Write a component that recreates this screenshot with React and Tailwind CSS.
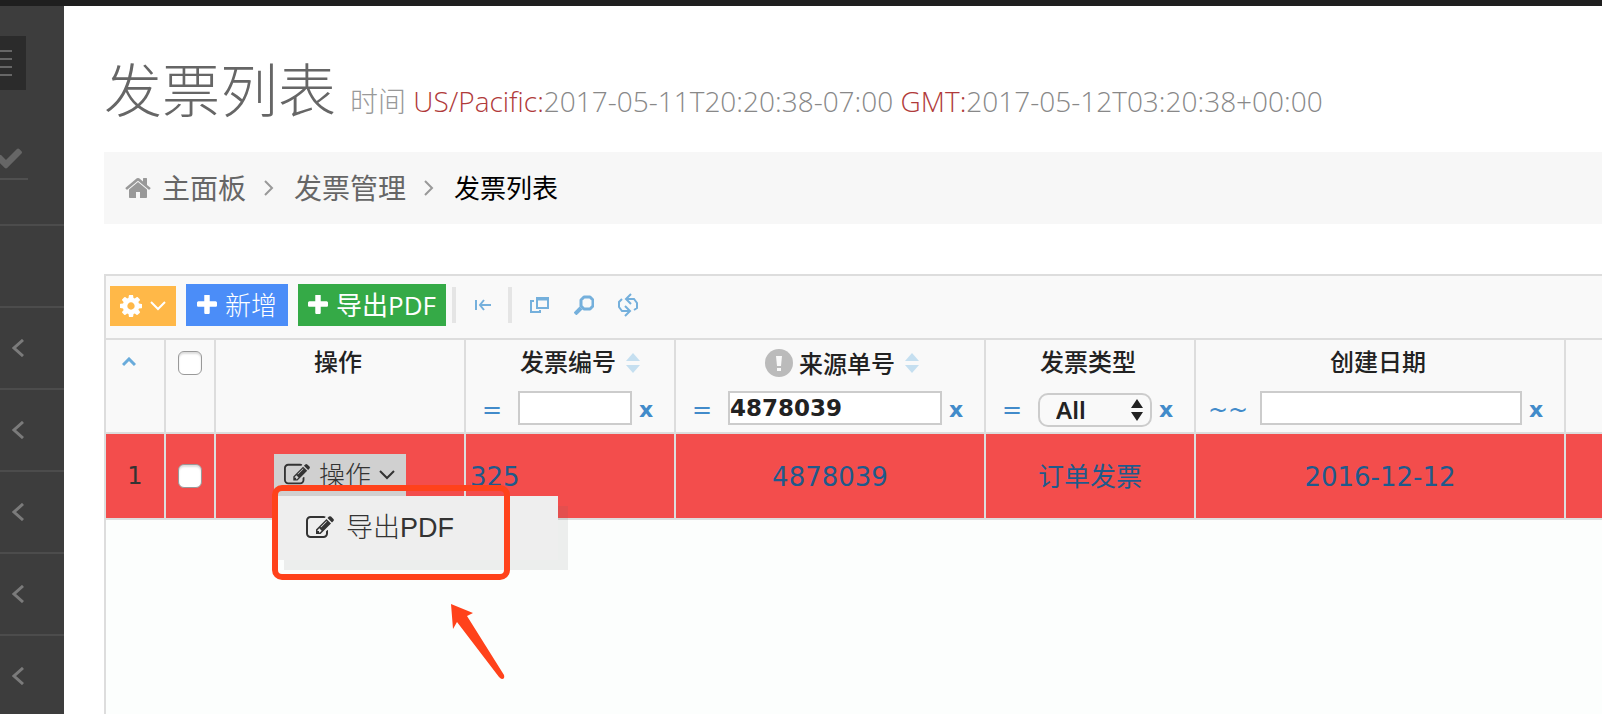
import React, { useState } from 'react';

const Icon = ({ d, box = '0 0 1792 1792', className }) => (
  <svg viewBox={box} fill="currentColor" aria-hidden="true" className={`shrink-0 ${className}`}>
    <path d={d} />
  </svg>
);

const Stroke = ({ points, box, width = 2, className }) => (
  <svg viewBox={box} fill="none" stroke="currentColor" strokeWidth={width} aria-hidden="true" className={`shrink-0 ${className}`}>
    <polyline points={points} />
  </svg>
);

const paths = {
  home: 'M1472 992v480q0 26-19 45t-45 19h-384v-384h-256v384h-384q-26 0-45-19t-19-45v-480q0-1 .5-3t.5-3l575-474 575 474q1 2 1 6zm223-69l-62 74q-8 9-21 11h-3q-13 0-21-7l-692-577-692 577q-12 8-24 7-13-2-21-11l-62-74q-8-10-7-23.5t11-21.5l719-599q32-26 76-26t76 26l244 204v-195q0-14 9-23t23-9h192q14 0 23 9t9 23v408l219 182q10 8 11 21.5t-7 23.5z',
  cog: 'M1152 896q0-106-75-181t-181-75-181 75-75 181 75 181 181 75 181-75 75-181zm512-109v222q0 12-8 23t-20 13l-185 28q-19 54-39 91 35 50 107 138 10 12 10 25t-9 23q-27 37-99 108t-94 71q-12 0-26-9l-138-108q-44 23-91 38-16 136-29 186-7 28-36 28h-222q-14 0-24.5-8.5t-11.5-21.5l-28-184q-49-16-90-37l-141 107q-10 9-25 9-14 0-25-11-126-114-165-168-7-10-7-23 0-12 8-23 15-21 51-66.5t54-70.5q-27-50-41-99l-183-27q-13-2-21-12.5t-8-23.5v-222q0-12 8-23t19-13l186-28q14-46 39-92-40-57-107-138-10-12-10-24 0-10 9-23 26-36 98.5-107.5t94.5-71.5q13 0 26 10l138 107q44-23 91-38 16-136 29-186 7-28 36-28h222q14 0 24.5 8.5t11.5 21.5l28 184q49 16 90 37l142-107q9-9 24-9 13 0 25 10 129 119 165 170 7 8 7 22 0 12-8 23-15 21-51 66.5t-54 70.5q26 50 41 98l183 28q13 2 21 12.5t8 23.5z',
  plus: 'M1600 736v192q0 40-28 68t-68 28h-416v416q0 40-28 68t-68 28h-192q-40 0-68-28t-28-68v-416h-416q-40 0-68-28t-28-68v-192q0-40 28-68t68-28h416v-416q0-40 28-68t68-28h192q40 0 68 28t28 68v416h416q40 0 68 28t28 68z',
  check: 'M1671 566q0 40-28 68l-724 724-136 136q-28 28-68 28t-68-28l-136-136-362-362q-28-28-28-68t28-68l136-136q28-28 68-28t68 28l294 295 656-657q28-28 68-28t68 28l136 136q28 28 28 68z',
  edit: 'M888 1184l116-116-152-152-116 116v56h96v96h56zm440-720q-16-16-33 1l-350 350q-17 17-1 33t33-1l350-350q17-17 1-33zm80 594v190q0 119-84.5 203.5t-203.5 84.5h-832q-119 0-203.5-84.5t-84.5-203.5v-832q0-119 84.5-203.5t203.5-84.5h832q63 0 117 25 15 7 18 23 3 17-9 29l-49 49q-14 14-32 8-23-6-45-6h-832q-66 0-113 47t-47 113v832q0 66 47 113t113 47h832q66 0 113-47t47-113v-126q0-13 9-22l64-64q15-15 35-7t20 29zm-96-738l288 288-672 672h-288v-288zm444 132l-92 92-288-288 92-92q28-28 68-28t68 28l152 152q28 28 28 68t-28 68z',
};

const PlusIcon = () => <Icon d={paths.plus} box="192 192 1408 1408" className="size-5" />;
const ChevronDown = ({ className = '' }) => (
  <Stroke points="1,1 8,8 15,1" box="0 0 16 10" className={`h-[10px] w-4 ${className}`} />
);

const SortIcon = () => (
  <svg viewBox="0 0 14 20" fill="#c5dff0" aria-hidden="true" className="h-5 w-[14px] shrink-0">
    <path d="M7 0l7 8H0zM0 12h14l-7 8z" />
  </svg>
);

const Sidebar = () => (
  <aside className="flex w-16 shrink-0 flex-col items-start overflow-hidden bg-[#3d3d3d] pt-[30px]">
    <button type="button" aria-label="菜单" className="flex h-[54px] w-[26px] items-center bg-[#2b2b2b] text-[#666]">
      <svg viewBox="0 0 12 28" fill="currentColor" aria-hidden="true" className="h-7 w-3">
        <path d="M0 1h12v2H0zM0 9h12v2H0zM0 17h12v2H0zM0 25h12v2H0z" />
      </svg>
    </button>
    <div className="flex h-[90px] w-7 items-center justify-end border-b-2 border-[#505050] pt-12 pr-1 text-[#666]">
      <Icon d={paths.check} className="size-[30px]" />
    </div>
    <nav className="mt-11 w-full">
      <div className="h-[82px] border-t-2 border-[#4c4c4c]" />
      {[1, 2, 3, 4, 5].map((n) => (
        <a key={n} href="#" aria-label={`菜单 ${n}`} className="flex h-[82px] items-center border-t-2 border-[#4c4c4c] pl-3 text-[#7b7b7b]">
          <Stroke points="11,1 2,9 11,17" box="0 0 12 18" width={3} className="h-[18px] w-3" />
        </a>
      ))}
    </nav>
  </aside>
);

const Toolbar = () => (
  <div className="flex h-16 items-center border-b-2 border-[#ddd] bg-[#f9f9f9] px-1 pb-1 font-['Open_Sans','Noto_Sans_CJK_SC',sans-serif] text-[26px] leading-10 font-light text-white">
    <button type="button" aria-label="设置" className="mt-[2px] flex h-10 w-[66px] items-center justify-center gap-2 bg-[#ffb848]">
      <Icon d={paths.cog} box="128 128 1536 1536" className="size-[22px]" />
      <ChevronDown />
    </button>
    <button type="button" className="ml-[10px] flex h-[42px] items-center gap-2 bg-[#4b8df8] pr-[11px] pl-[11px]">
      <PlusIcon />
      新增
    </button>
    <button type="button" className="ml-[10px] flex h-[42px] items-center gap-2 bg-[#35aa47] px-[10px] font-normal">
      <PlusIcon />
      导出PDF
    </button>
    <span className="ml-[6px] h-9 w-1 bg-[#e5e5e5]" />
    <div className="flex flex-1 items-center text-[#75b0dc]">
      <button type="button" aria-label="折叠" className="ml-[18px]">
        <svg viewBox="0 0 18 12" fill="none" stroke="currentColor" strokeWidth="2" className="h-3 w-[18px]">
          <path d="M2 1v10M17 6H6M10 1L6 6l4 5" />
        </svg>
      </button>
      <span className="ml-4 h-9 w-1 bg-[#e5e5e5]" />
      <button type="button" aria-label="选择列" className="ml-[18px]">
        <svg viewBox="0 0 20 18" fill="none" stroke="currentColor" strokeWidth="2" className="h-[18px] w-5">
          <path d="M7 2h11v10H7zM4 5H1v11h9v-2" />
          <path d="M7 3h11" strokeWidth="3" />
        </svg>
      </button>
      <button type="button" aria-label="查找" className="ml-6">
        <svg viewBox="0 0 20 20" fill="none" stroke="currentColor" className="size-5">
          <path d="M10 2h6l3 3v6l-3 3h-6l-3-3V5z" strokeWidth="3" strokeLinejoin="round" />
          <path d="M7 13l-6 6" strokeWidth="4" />
        </svg>
      </button>
      <button type="button" aria-label="刷新" className="ml-6">
        <svg viewBox="0 0 20 24" fill="none" stroke="currentColor" strokeWidth="2" className="h-6 w-5">
          <path d="M13 1L8 6l5 5M8 6h8l3 4v5l-3 2M7 13l5 5-5 5M12 18H4l-3-4V9l3-3" />
        </svg>
      </button>
    </div>
  </div>
);

const checkboxClass =
  'mx-auto block size-6 appearance-none rounded-[6px] border border-[#999] bg-white shadow-[inset_0_2px_2px_#ddd] checked:bg-[#4b8df8]';

const thClass = 'h-[94px] border-r-2 border-b-2 border-[#ddd] p-0 align-top font-semibold';
const tdClass = 'h-[86px] border-r-2 border-b-2 border-[#ddd] p-0 text-center';

const HeadTitle = ({ children }) => (
  <div className="flex h-[46px] items-center justify-center gap-[10px] pr-1 text-2xl font-medium">{children}</div>
);

const FilterRow = ({ op, wide, children }) => (
  <div className="flex h-11 items-center text-2xl text-[#428bca]">
    <button type="button" className={`shrink-0 pt-1 text-center font-normal ${wide ? 'w-16' : 'w-[52px]'}`}>{op}</button>
    <div className="relative min-w-0 flex-1 text-[#222]">{children}</div>
    <button type="button" aria-label="清除" className="w-[42px] shrink-0 pt-1 pl-[7px] text-left text-[22px] font-bold">x</button>
  </div>
);

const FilterInput = ({ label, initial = '' }) => {
  const [value, setValue] = useState(initial);
  return (
    <input
      type="text"
      aria-label={label}
      value={value}
      onChange={(e) => setValue(e.target.value)}
      className="block h-[34px] w-full border-2 border-[#ccc] bg-white p-0 font-['DejaVu_Sans',sans-serif] text-[23px] leading-7 font-bold"
    />
  );
};

// Action dropdown of a row, with the highlighted menu entry below it
const ActionMenu = () => (
  <div className="relative mx-auto h-[42px] w-[132px] font-['Open_Sans','Noto_Sans_CJK_SC',sans-serif] text-[#333]">
    <button type="button" className="flex h-[42px] w-full items-center bg-[#d0d0d0] pl-[10px] text-[26px] font-light">
      <Icon d={paths.edit} className="size-[26px]" />
      <span className="ml-[9px]">操作</span>
      <ChevronDown className="ml-2" />
    </button>
    <div className="absolute top-[42px] left-0 z-10 w-[284px] bg-[#eee] shadow-[10px_10px_0_rgba(102,102,102,0.1)]">
      <a href="#" className="flex h-16 items-center gap-3 pl-8 font-['Liberation_Sans','Noto_Sans_CJK_SC',sans-serif] text-[27px] font-light">
        <Icon d={paths.edit} className="size-7" />
        导出PDF
      </a>
    </div>
    <div className="pointer-events-none absolute top-[31px] -left-[2px] z-20 h-[95px] w-[238px] rounded-[10px] border-6 border-[#ff421b]" />
    <svg viewBox="0 0 56 78" fill="#ff421b" aria-hidden="true" className="pointer-events-none absolute top-[149px] left-[176px] z-20 h-[78px] w-14">
      <path d="M1 1L23 10L17 13L54 72Q55 76 52 76Q51 76 49 74L7 19L3 26Z" />
    </svg>
  </div>
);

const InvoiceGrid = () => (
  <section className="flex-1 border-t-2 border-l-2 border-[#ddd] bg-[#fcfefd]">
    <Toolbar />
    <table className="w-full table-fixed border-separate border-spacing-0 font-['DejaVu_Sans','Noto_Sans_CJK_SC',sans-serif] text-[26px] text-[#222]">
      <colgroup>
        <col className="w-[60px]" />
        <col className="w-[50px]" />
        <col className="w-[250px]" />
        <col className="w-[210px]" />
        <col className="w-[310px]" />
        <col className="w-[210px]" />
        <col className="w-[370px]" />
        <col />
      </colgroup>
      <thead className="bg-[#f9f9f9]">
        <tr>
          <th className={thClass}>
            <div className="flex h-11 items-center pl-4 text-[#69abdb]">
              <Stroke points="1,8 7,2 13,8" box="0 0 14 10" width={3} className="h-[10px] w-[14px]" />
            </div>
          </th>
          <th className={thClass}>
            <div className="flex h-[46px] items-center">
              <input type="checkbox" aria-label="全选" className={checkboxClass} />
            </div>
          </th>
          <th className={thClass}>
            <HeadTitle>操作</HeadTitle>
          </th>
          <th className={thClass}>
            <HeadTitle>
              <span className="ml-6">发票编号</span>
              <SortIcon />
            </HeadTitle>
            <FilterRow op="=">
              <FilterInput label="发票编号" />
            </FilterRow>
          </th>
          <th className={thClass}>
            <HeadTitle>
              <svg viewBox="0 0 28 28" aria-hidden="true" className="ml-7 size-7 shrink-0">
                <circle cx="14" cy="14" r="14" fill="#bbb" />
                <path d="M11 7h6l-1 10h-4zM12 19h4v3h-4z" fill="#f9f9f9" />
              </svg>
              <span className="-ml-1 pt-1">来源单号</span>
              <SortIcon />
            </HeadTitle>
            <FilterRow op="=">
              <FilterInput label="来源单号" initial="4878039" />
            </FilterRow>
          </th>
          <th className={thClass}>
            <HeadTitle>发票类型</HeadTitle>
            <FilterRow op="=">
              <select
                aria-label="发票类型"
                className="mt-1 block h-[34px] w-full appearance-none rounded-[10px] border-2 border-[#ccc] bg-[#f9f9f9] pl-4 font-['Noto_Sans',sans-serif] text-2xl leading-7 font-semibold"
              >
                <option>All</option>
                <option>订单发票</option>
              </select>
              <svg viewBox="0 0 12 22" fill="#222" aria-hidden="true" className="pointer-events-none absolute top-[10px] right-[9px] h-[22px] w-3">
                <path d="M6 0l6 9H0zM0 13h12l-6 9z" />
              </svg>
            </FilterRow>
          </th>
          <th className={thClass}>
            <HeadTitle>创建日期</HeadTitle>
            <FilterRow op="~~" wide>
              <FilterInput label="创建日期" />
            </FilterRow>
          </th>
          <th className="border-b-2 border-[#ddd] p-0" />
        </tr>
      </thead>
      <tbody>
        <tr className="bg-[#f34d4c] text-[#1f5a8b]">
          <td className={`${tdClass} text-2xl text-[#333]`}>1</td>
          <td className={tdClass}>
            <input type="checkbox" aria-label="选择第 1 行" className={checkboxClass} />
          </td>
          <td className={`${tdClass} pb-[2px]`}>
            <ActionMenu />
          </td>
          <td className="h-[86px] border-r-2 border-b-2 border-[#ddd] pt-[2px] pr-0 pb-0 pl-1 text-left">325</td>
          <td className={`${tdClass} pt-[2px]`}>4878039</td>
          <td className={`${tdClass} pt-[2px]`}>订单发票</td>
          <td className={`${tdClass} pt-[2px]`}>2016-12-12</td>
          <td className="border-b-2 border-[#ddd] p-0" />
        </tr>
      </tbody>
    </table>
  </section>
);

const App = () => {
  return (
    <div className="flex min-h-screen flex-col bg-white font-['Open_Sans','Noto_Sans_CJK_SC',sans-serif]">
      <header className="h-[6px] bg-[#1f1f1f]" />
      <div className="flex flex-1">
        <Sidebar />
        <main className="flex min-w-0 flex-1 flex-col pl-10">
          <h1 className="flex h-[146px] items-baseline gap-[14px] pt-[42px] text-[58px] leading-[84px] font-light whitespace-nowrap text-[#666]">
            发票列表
            <small className="text-[28px] text-[#888]">
              <span className="text-[#999]">时间</span> <span className="text-[#b03a3a]">US/Pacific:</span>2017-05-11T20:20:38-07:00{' '}
              <span className="text-[#b03a3a]">GMT:</span>2017-05-12T03:20:38+00:00
            </small>
          </h1>

          {/* Breadcrumb */}
          <nav className="flex h-[72px] items-center bg-[#f7f7f7] pl-5 text-[28px] text-[#666]">
            <Icon d={paths.home} className="size-7 text-[#999]" />
            <a href="#" className="ml-[10px]">主面板</a>
            <Stroke points="1,1 8,8 1,15" box="0 0 10 16" className="ml-[18px] h-4 w-[10px] text-[#999]" />
            <a href="#" className="ml-5">发票管理</a>
            <Stroke points="1,1 8,8 1,15" box="0 0 10 16" className="ml-[18px] h-4 w-[10px] text-[#999]" />
            <a href="#" className="ml-5 text-[26px] text-black">发票列表</a>
          </nav>

          <div className="mt-[50px] flex flex-1 flex-col">
            <InvoiceGrid />
          </div>
        </main>
      </div>
    </div>
  );
};

export default App;
